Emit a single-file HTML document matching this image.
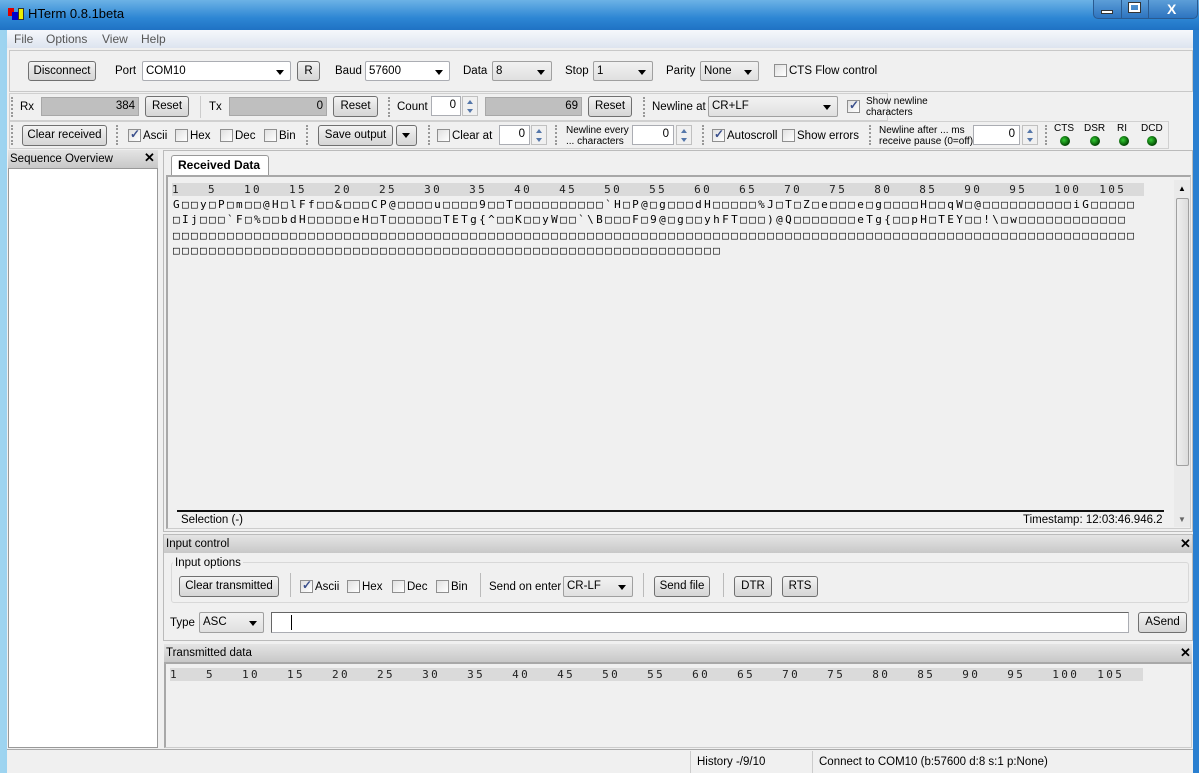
<!DOCTYPE html>
<html><head><meta charset="utf-8">
<style>
*{box-sizing:border-box;margin:0;padding:0}
body{width:1199px;height:773px;overflow:hidden;position:relative;background:#f0f0f0;font-family:"Liberation Sans",sans-serif;font-size:11.5px;color:#000}
.a{position:absolute}
.t{position:absolute;white-space:nowrap;line-height:14px}
.btn{position:absolute;border:1px solid #707070;border-radius:3px;background:linear-gradient(#f4f4f4,#e2e2e2 50%,#d6d6d6);text-align:center;white-space:nowrap;line-height:18px}
.sel{position:absolute;border:1px solid #a0a0a0;border-radius:2px;background:linear-gradient(#f2f2f2,#e0e0e0);padding-left:3px;line-height:18px;white-space:nowrap}
.sel.w{background:#fff;border-color:#abadb3}
.sel:after{content:"";position:absolute;right:6px;top:8px;border-left:4px solid transparent;border-right:4px solid transparent;border-top:5px solid #000}
.fld{position:absolute;background:#bfbfbf;border:1px solid #a8a8a8;text-align:right;padding-right:3px;line-height:17px}
.inp{position:absolute;background:#fff;border:1px solid #abadb3;text-align:right;padding-right:4px;line-height:17px}
.spin{position:absolute;width:16px;height:20px;border:1px solid #c0c0c0;background:#f0f0f0}
.spin:before,.spin:after{content:"";position:absolute;left:4px;border-left:3px solid transparent;border-right:3px solid transparent}
.spin:before{top:3px;border-bottom:4px solid #5577aa}
.spin:after{top:12px;border-top:4px solid #5577aa}
.cb{position:absolute;width:13px;height:13px;border:1px solid #8f8f8f;background:linear-gradient(135deg,#e0e0e0,#fff)}
.cb.c:after{content:"✓";position:absolute;left:1px;top:-3px;font-size:12px;color:#3a4f8c;font-weight:bold}
.grip{position:absolute;width:2px;border-left:2px dotted #999}
.hdr{position:absolute;background:linear-gradient(#e4e4e4,#c8c8c8);height:18px;line-height:18px;padding-left:2px}
.x{position:absolute;font-weight:bold;font-size:13px}
.mono{font-family:"DejaVu Sans Mono",monospace;font-size:11px;letter-spacing:2.38px;white-space:pre;position:absolute;line-height:15px}
.led{position:absolute;width:10px;height:10px;border-radius:50%;background:radial-gradient(circle at 40% 40%,#3c3,#040 70%)}
.sm{font-size:10px;line-height:11px}
</style></head><body>
<div class="a" style="left:0;top:0;width:1199px;height:773px;background:linear-gradient(90deg,#9ed4f0,#4ba0e0 30%,#1f74c6 70%,#2a7fd0)"></div>
<div class="a" style="left:0;top:0;width:1199px;height:30px;background:linear-gradient(#6cb2e6,#2d86d4 60%,#1f72c4)"></div>
<div class="a" style="left:8px;top:8px;width:6px;height:8px;background:#d00"></div>
<div class="a" style="left:12px;top:12px;width:8px;height:8px;background:#00c"></div>
<div class="a" style="left:18px;top:8px;width:6px;height:12px;background:#ee0;border:1px solid #333"></div>
<div class="t" style="left:28px;top:7px;font-size:13px;color:#000">HTerm 0.8.1beta</div>
<div class="a" style="left:1093px;top:0;width:105px;height:19px;border:1px solid #2a5a90;border-top:none;border-radius:0 0 5px 5px;background:linear-gradient(#5c9ed8,#2d74c0)"></div>
<div class="a" style="left:1121px;top:0;width:1px;height:19px;background:#2a5a90"></div>
<div class="a" style="left:1148px;top:0;width:1px;height:19px;background:#2a5a90"></div>
<div class="a" style="left:1101px;top:10px;width:12px;height:4px;background:#fff;border:1px solid #333"></div>
<div class="a" style="left:1129px;top:3px;width:11px;height:9px;border:2px solid #fff;outline:1px solid #333"></div>
<div class="t" style="left:1167px;top:2px;color:#fff;font-weight:bold;font-size:14px">X</div>
<div class="a" style="left:7px;top:30px;width:1186px;height:743px;background:#f0f0f0"></div>
<div class="a" style="left:7px;top:30px;width:1186px;height:18px;background:linear-gradient(#f6f8fc,#dde4ef)"></div>
<div class="t" style="left:14px;top:32px;color:#555;font-size:12px">File</div>
<div class="t" style="left:46px;top:32px;color:#555;font-size:12px">Options</div>
<div class="t" style="left:102px;top:32px;color:#555;font-size:12px">View</div>
<div class="t" style="left:141px;top:32px;color:#555;font-size:12px">Help</div>
<div class="a" style="left:9px;top:50px;width:1184px;height:42px;border:1px solid #c8c8c8;background:#f0f0f0"></div>
<div class="btn" style="left:28px;top:61px;width:68px;height:20px">Disconnect</div>
<div class="t" style="left:115px;top:64px">Port</div>
<div class="sel w" style="left:142px;top:61px;width:149px;height:20px">COM10</div>
<div class="btn" style="left:297px;top:61px;width:23px;height:20px">R</div>
<div class="t" style="left:335px;top:64px">Baud</div>
<div class="sel w" style="left:365px;top:61px;width:85px;height:20px">57600</div>
<div class="t" style="left:463px;top:64px">Data</div>
<div class="sel" style="left:492px;top:61px;width:60px;height:20px">8</div>
<div class="t" style="left:565px;top:64px">Stop</div>
<div class="sel" style="left:593px;top:61px;width:60px;height:20px">1</div>
<div class="t" style="left:666px;top:64px">Parity</div>
<div class="sel" style="left:700px;top:61px;width:59px;height:20px">None</div>
<div class="cb" style="left:774px;top:64px"></div>
<div class="t" style="left:789px;top:64px">CTS Flow control</div>
<div class="a" style="left:9px;top:93px;width:879px;height:28px;border:1px solid #d0d0d0"></div>
<div class="grip" style="left:11px;top:97px;height:20px"></div>
<div class="t" style="left:20px;top:100px">Rx</div>
<div class="fld" style="left:41px;top:97px;width:98px;height:19px">384</div>
<div class="btn" style="left:145px;top:96px;width:44px;height:21px">Reset</div>
<div class="a" style="left:200px;top:96px;width:1px;height:22px;background:#ccc"></div>
<div class="t" style="left:209px;top:100px">Tx</div>
<div class="fld" style="left:229px;top:97px;width:98px;height:19px">0</div>
<div class="btn" style="left:333px;top:96px;width:45px;height:21px">Reset</div>
<div class="grip" style="left:388px;top:97px;height:20px"></div>
<div class="t" style="left:397px;top:100px">Count</div>
<div class="inp" style="left:431px;top:96px;width:30px;height:20px">0</div>
<div class="spin" style="left:462px;top:96px"></div>
<div class="fld" style="left:485px;top:97px;width:97px;height:19px">69</div>
<div class="btn" style="left:588px;top:96px;width:44px;height:21px">Reset</div>
<div class="grip" style="left:643px;top:97px;height:20px"></div>
<div class="t" style="left:652px;top:100px">Newline at</div>
<div class="sel" style="left:708px;top:96px;width:130px;height:21px">CR+LF</div>
<div class="cb c" style="left:847px;top:100px"></div>
<div class="t sm" style="left:866px;top:96px">Show newline<br>characters</div>
<div class="a" style="left:9px;top:121px;width:1160px;height:28px;border:1px solid #d0d0d0"></div>
<div class="grip" style="left:11px;top:125px;height:20px"></div>
<div class="btn" style="left:22px;top:125px;width:85px;height:21px">Clear received</div>
<div class="grip" style="left:116px;top:125px;height:20px"></div>
<div class="cb c" style="left:128px;top:129px"></div><div class="t" style="left:143px;top:129px">Ascii</div>
<div class="cb" style="left:175px;top:129px"></div><div class="t" style="left:190px;top:129px">Hex</div>
<div class="cb" style="left:220px;top:129px"></div><div class="t" style="left:235px;top:129px">Dec</div>
<div class="cb" style="left:264px;top:129px"></div><div class="t" style="left:279px;top:129px">Bin</div>
<div class="grip" style="left:306px;top:125px;height:20px"></div>
<div class="btn" style="left:318px;top:125px;width:75px;height:21px">Save output</div>
<div class="btn" style="left:396px;top:125px;width:21px;height:21px"></div>
<div class="a" style="left:402px;top:133px;border-left:4px solid transparent;border-right:4px solid transparent;border-top:5px solid #000"></div>
<div class="grip" style="left:428px;top:125px;height:20px"></div>
<div class="cb" style="left:437px;top:129px"></div><div class="t" style="left:452px;top:129px">Clear at</div>
<div class="inp" style="left:499px;top:125px;width:31px;height:20px">0</div>
<div class="spin" style="left:531px;top:125px"></div>
<div class="grip" style="left:555px;top:125px;height:20px"></div>
<div class="t sm" style="left:566px;top:125px">Newline every<br>... characters</div>
<div class="inp" style="left:632px;top:125px;width:42px;height:20px">0</div>
<div class="spin" style="left:676px;top:125px"></div>
<div class="grip" style="left:702px;top:125px;height:20px"></div>
<div class="cb c" style="left:712px;top:129px"></div><div class="t" style="left:727px;top:129px">Autoscroll</div>
<div class="cb" style="left:782px;top:129px"></div><div class="t" style="left:797px;top:129px">Show errors</div>
<div class="grip" style="left:869px;top:125px;height:20px"></div>
<div class="t sm" style="left:879px;top:125px">Newline after ... ms<br>receive pause (0=off)</div>
<div class="inp" style="left:973px;top:125px;width:47px;height:20px">0</div>
<div class="spin" style="left:1022px;top:125px"></div>
<div class="grip" style="left:1045px;top:125px;height:20px"></div>
<div class="t sm" style="left:1054px;top:123px">CTS</div><div class="t sm" style="left:1084px;top:123px">DSR</div><div class="t sm" style="left:1117px;top:123px">RI</div><div class="t sm" style="left:1141px;top:123px">DCD</div>
<div class="led" style="left:1060px;top:136px"></div><div class="led" style="left:1090px;top:136px"></div><div class="led" style="left:1119px;top:136px"></div><div class="led" style="left:1147px;top:136px"></div>
<div class="hdr" style="left:8px;top:150px;width:150px">Sequence Overview</div>
<div class="x" style="left:144px;top:150px">✕</div>
<div class="a" style="left:8px;top:168px;width:150px;height:580px;background:#fff;border:1px solid #999"></div>
<div class="a" style="left:163px;top:150px;width:1030px;height:382px;border:1px solid #bbb;background:#f0f0f0"></div>
<div class="a" style="left:171px;top:155px;width:98px;height:20px;border:1px solid #999;border-bottom:none;border-radius:3px 3px 0 0;background:#fff"></div>
<div class="t" style="left:178px;top:158px;font-weight:bold;font-size:12px">Received Data</div>
<div class="a" style="left:166px;top:175px;width:1025px;height:354px;border:2px solid #a8a8a8;border-right:1px solid #ccc;border-bottom:1px solid #ccc;background:#f0f0f0"></div>
<div class="a" style="left:172px;top:183px;width:972px;height:13px;background:#dadada"></div>
<div class="mono" style="left:172px;top:182px;color:#222">1   5   10   15   20   25   30   35   40   45   50   55   60   65   70   75   80   85   90   95   100  105</div>
<div class="mono" style="left:173px;top:197px">G□□y□P□m□□@H□lFf□□&amp;□□□CP@□□□□u□□□□9□□T□□□□□□□□□□`H□P@□g□□□dH□□□□□%J□T□Z□e□□□e□g□□□□H□□qW□@□□□□□□□□□□iG□□□□□</div>
<div class="mono" style="left:173px;top:212px">□Ij□□□`F□%□□bdH□□□□□eH□T□□□□□□TETg{^□□K□□yW□□`\B□□□F□9@□g□□yhFT□□□)@Q□□□□□□□eTg{□□pH□TEY□□!\□w□□□□□□□□□□□□</div>
<div class="mono" style="left:173px;top:228px">□□□□□□□□□□□□□□□□□□□□□□□□□□□□□□□□□□□□□□□□□□□□□□□□□□□□□□□□□□□□□□□□□□□□□□□□□□□□□□□□□□□□□□□□□□□□□□□□□□□□□□□□□□□</div>
<div class="mono" style="left:173px;top:243px">□□□□□□□□□□□□□□□□□□□□□□□□□□□□□□□□□□□□□□□□□□□□□□□□□□□□□□□□□□□□□</div>
<div class="a" style="left:1174px;top:180px;width:16px;height:347px;background:#eaeaea"></div>
<div class="a" style="left:1176px;top:198px;width:13px;height:268px;border:1px solid #a0a0a0;border-radius:2px;background:linear-gradient(90deg,#eee,#dcdcdc)"></div>
<div class="t" style="left:1178px;top:182px;font-size:8px">▲</div>
<div class="t" style="left:1178px;top:513px;font-size:8px;color:#666">▼</div>
<div class="a" style="left:177px;top:510px;width:987px;height:2px;background:#111"></div>
<div class="t" style="left:181px;top:513px">Selection (-)</div>
<div class="t" style="left:1023px;top:513px">Timestamp: 12:03:46.946.2</div>
<div class="a" style="left:163px;top:534px;width:1030px;height:107px;border:1px solid #bbb"></div>
<div class="hdr" style="left:164px;top:535px;width:1028px">Input control</div>
<div class="x" style="left:1180px;top:536px">✕</div>
<div class="a" style="left:171px;top:562px;width:1018px;height:41px;border:1px solid #d8d8d8;border-radius:3px"></div>
<div class="t" style="left:173px;top:556px;background:#f0f0f0;padding:0 2px">Input options</div>
<div class="btn" style="left:179px;top:576px;width:100px;height:21px">Clear transmitted</div>
<div class="a" style="left:290px;top:573px;width:1px;height:24px;background:#bbb"></div>
<div class="cb c" style="left:300px;top:580px"></div><div class="t" style="left:315px;top:580px">Ascii</div>
<div class="cb" style="left:347px;top:580px"></div><div class="t" style="left:362px;top:580px">Hex</div>
<div class="cb" style="left:392px;top:580px"></div><div class="t" style="left:407px;top:580px">Dec</div>
<div class="cb" style="left:436px;top:580px"></div><div class="t" style="left:451px;top:580px">Bin</div>
<div class="a" style="left:480px;top:573px;width:1px;height:24px;background:#bbb"></div>
<div class="t" style="left:489px;top:580px">Send on enter</div>
<div class="sel" style="left:563px;top:576px;width:70px;height:21px">CR-LF</div>
<div class="a" style="left:643px;top:573px;width:1px;height:24px;background:#bbb"></div>
<div class="btn" style="left:654px;top:576px;width:56px;height:21px">Send file</div>
<div class="a" style="left:723px;top:573px;width:1px;height:24px;background:#bbb"></div>
<div class="btn" style="left:734px;top:576px;width:38px;height:21px">DTR</div>
<div class="btn" style="left:782px;top:576px;width:36px;height:21px">RTS</div>
<div class="t" style="left:170px;top:616px">Type</div>
<div class="sel" style="left:199px;top:612px;width:65px;height:21px">ASC</div>
<div class="a" style="left:271px;top:612px;width:858px;height:21px;background:#fff;border:1px solid #abadb3;border-top-color:#666;border-left-color:#666"></div>
<div class="a" style="left:291px;top:615px;width:1px;height:15px;background:#000"></div>
<div class="btn" style="left:1138px;top:612px;width:49px;height:21px">ASend</div>
<div class="hdr" style="left:164px;top:644px;width:1028px">Transmitted data</div>
<div class="x" style="left:1180px;top:645px">✕</div>
<div class="a" style="left:164px;top:662px;width:1028px;height:86px;border:2px solid #a8a8a8;border-right:1px solid #ccc;border-bottom:1px solid #ccc"></div>
<div class="a" style="left:170px;top:668px;width:973px;height:13px;background:#dadada"></div>
<div class="mono" style="left:170px;top:667px;color:#222">1   5   10   15   20   25   30   35   40   45   50   55   60   65   70   75   80   85   90   95   100  105</div>
<div class="a" style="left:7px;top:749px;width:1186px;height:24px;border-top:1px solid #aaa;background:#f0f0f0"></div>
<div class="a" style="left:690px;top:751px;width:1px;height:22px;background:#ccc"></div>
<div class="a" style="left:812px;top:751px;width:1px;height:22px;background:#ccc"></div>
<div class="t" style="left:697px;top:755px">History -/9/10</div>
<div class="t" style="left:819px;top:755px">Connect to COM10 (b:57600 d:8 s:1 p:None)</div>
</body></html>
